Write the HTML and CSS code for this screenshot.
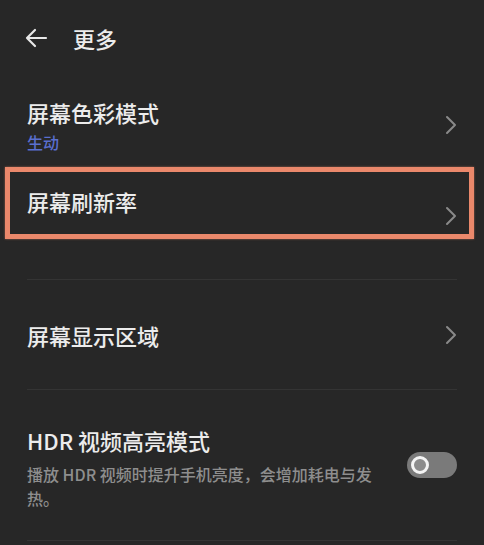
FILE: index.html
```html
<!DOCTYPE html>
<html lang="zh-CN">
<head>
    <meta charset="UTF-8">
    <meta name="viewport" content="width=device-width, initial-scale=1.0">
    <title>更多</title>
    <link rel="stylesheet" href="styles.css">
</head>
<body>

    <div class="header">
        <svg class="back" width="24" height="20" viewBox="0 0 24 20">
            <path d="M22 10H3M11 2L3 10l8 8" fill="none" stroke="#e8e8e8" stroke-width="2.2" stroke-linecap="round" stroke-linejoin="round"/>
        </svg>
        <span class="page-title">更多</span>
    </div>

    <div class="list">
        <div class="row row-color">
            <div class="text">
                <div class="title">屏幕色彩模式</div>
                <div class="value">生动</div>
            </div>
            <svg class="chev" width="12" height="20" viewBox="0 0 12 20">
                <path d="M2 2l8 8-8 8" fill="none" stroke="#8a8a8a" stroke-width="2" stroke-linecap="round" stroke-linejoin="round"/>
            </svg>
        </div>

        <div class="row row-rate divided">
            <div class="mark"></div>
            <div class="text">
                <div class="title">屏幕刷新率</div>
            </div>
            <svg class="chev" width="12" height="20" viewBox="0 0 12 20">
                <path d="M2 2l8 8-8 8" fill="none" stroke="#8a8a8a" stroke-width="2" stroke-linecap="round" stroke-linejoin="round"/>
            </svg>
        </div>

        <div class="row row-area divided">
            <div class="text">
                <div class="title">屏幕显示区域</div>
            </div>
            <svg class="chev" width="12" height="20" viewBox="0 0 12 20">
                <path d="M2 2l8 8-8 8" fill="none" stroke="#8a8a8a" stroke-width="2" stroke-linecap="round" stroke-linejoin="round"/>
            </svg>
        </div>

        <div class="row row-hdr divided">
            <div class="text">
                <div class="title">HDR 视频高亮模式</div>
                <div class="desc">播放 HDR 视频时提升手机亮度，会增加耗电与发热。</div>
            </div>
            <div class="toggle"><span class="knob"></span></div>
        </div>
    </div>

</body>
</html>
```

FILE: styles.css
```css
body {
    margin: 0;
    background-color: #272727;
    color: #ececec;
    font-family: "Noto Sans CJK SC", "Noto Sans", sans-serif;
}
.header {
    height: 76px;
    display: flex;
    align-items: center;
    padding-left: 24px;
    gap: 25px;
}
.page-title {
    font-size: 22px;
    line-height: 28px;
    font-weight: 500;
}
.list {
    position: relative;
}
.row {
    position: relative;
    display: flex;
    justify-content: space-between;
    align-items: flex-start;
    padding: 0 27px;
}
.divided::after {
    content: "";
    position: absolute;
    left: 27px;
    right: 27px;
    bottom: 0;
    height: 1px;
    background: #343434;
}
.title {
    font-size: 22px;
    line-height: 22px;
    font-weight: 500;
}
.value {
    font-size: 16px;
    line-height: 20px;
    margin-top: 9px;
    color: #5a6fcf;
    font-weight: 500;
}
.desc {
    font-size: 16px;
    line-height: 24px;
    margin-top: 11px;
    color: #8e8e8e;
    font-weight: 500;
    max-width: 358px;
}
.chev {
    flex-shrink: 0;
}

.row-color {
    height: 64px;
    padding-top: 25px;
}
.row-color .chev {
    margin-top: 14px;
}
.row-rate {
    height: 90px;
    padding-top: 25px;
}
.row-rate .chev {
    margin-top: 16px;
}
.row-area {
    height: 66px;
    padding-top: 44px;
}
.row-area .chev {
    margin-top: 1px;
}
.row-hdr {
    height: 112px;
    padding-top: 39px;
}

/* annotation box drawn over the refresh rate row */
.mark {
    position: absolute;
    left: 5px;
    top: 2px;
    width: 459px;
    height: 62px;
    border: 5px solid #ea886b;
    box-shadow: 0 0 2px rgba(234, 136, 107, 0.6);
}

.toggle {
    flex-shrink: 0;
    margin-top: 23px;
    width: 50px;
    height: 26px;
    border-radius: 13px;
    background: #7a7a7a;
    position: relative;
}
.knob {
    position: absolute;
    left: 4px;
    top: 4px;
    width: 12px;
    height: 12px;
    border: 3px solid #f4f4f4;
    border-radius: 50%;
    background: #8c8c8c;
}
```
